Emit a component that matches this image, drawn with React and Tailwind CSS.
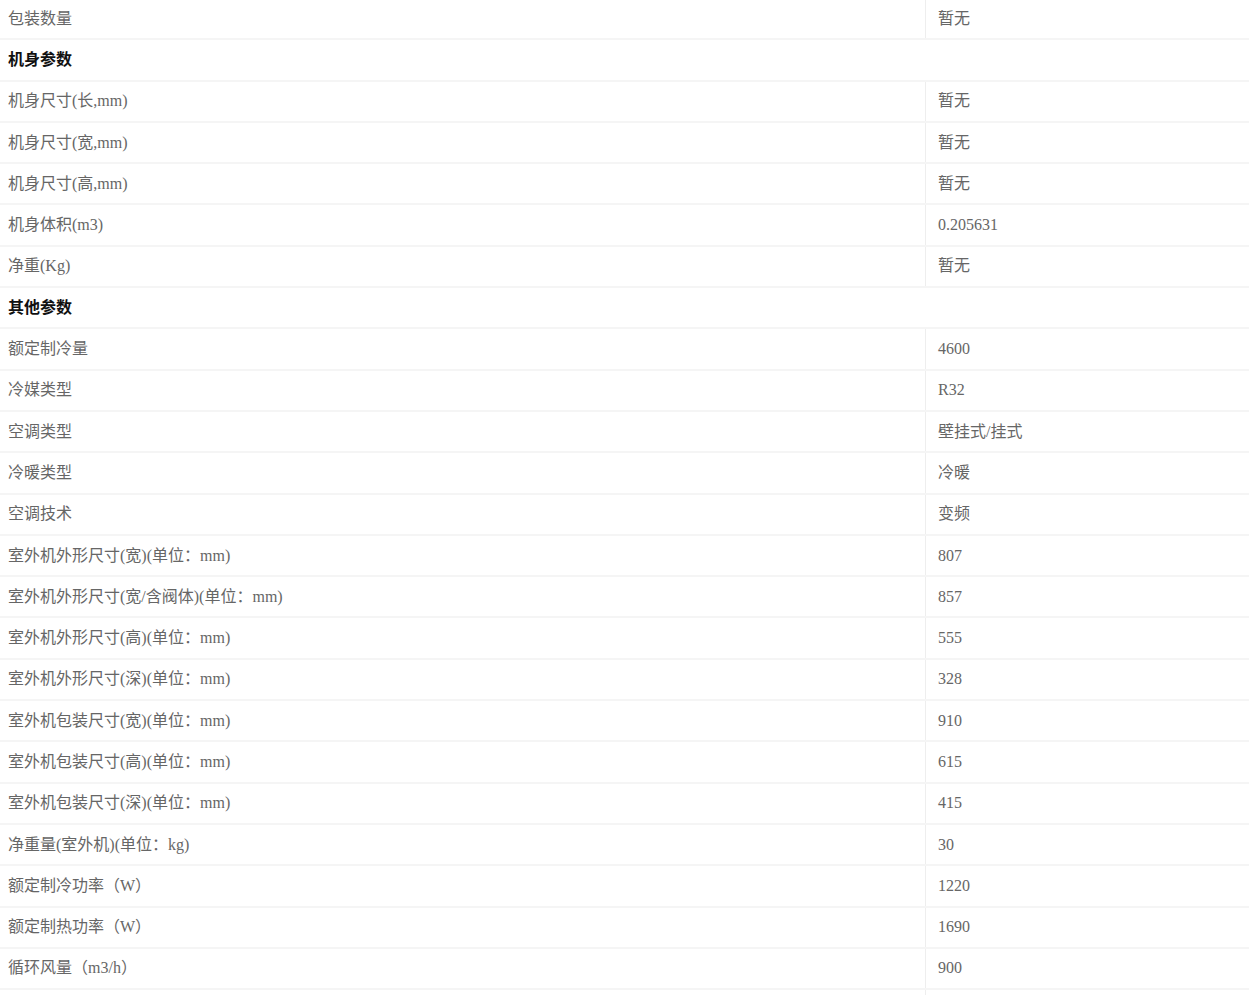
import React from "react";

const rows = [
  ["包装数量", "暂无"],
  ["机身参数"],
  ["机身尺寸(长,mm)", "暂无"],
  ["机身尺寸(宽,mm)", "暂无"],
  ["机身尺寸(高,mm)", "暂无"],
  ["机身体积(m3)", "0.205631"],
  ["净重(Kg)", "暂无"],
  ["其他参数"],
  ["额定制冷量", "4600"],
  ["冷媒类型", "R32"],
  ["空调类型", "壁挂式/挂式"],
  ["冷暖类型", "冷暖"],
  ["空调技术", "变频"],
  ["室外机外形尺寸(宽)(单位：mm)", "807"],
  ["室外机外形尺寸(宽/含阀体)(单位：mm)", "857"],
  ["室外机外形尺寸(高)(单位：mm)", "555"],
  ["室外机外形尺寸(深)(单位：mm)", "328"],
  ["室外机包装尺寸(宽)(单位：mm)", "910"],
  ["室外机包装尺寸(高)(单位：mm)", "615"],
  ["室外机包装尺寸(深)(单位：mm)", "415"],
  ["净重量(室外机)(单位：kg)", "30"],
  ["额定制冷功率（W）", "1220"],
  ["额定制热功率（W）", "1690"],
  ["循环风量（m3/h）", "900"],
  ["", ""],
];

export default function App() {
  return (
    <div
      className="w-[1249px] h-[995px] overflow-hidden bg-white"
      style={{ fontFamily: '"Liberation Serif", "Noto Sans CJK SC", serif' }}
    >
      <div className="-mt-[1px] flex flex-col">
        {rows.map((r, i) =>
          r.length === 1 ? (
            <div
              key={i}
              className="h-[41.3px] shrink-0 flex items-center border-b-2 border-[#f5f5f5] pl-[8px] text-[16px] font-bold text-[#111]"
            >
              {r[0]}
            </div>
          ) : (
            <div
              key={i}
              className="h-[41.3px] shrink-0 flex border-b-2 border-[#f5f5f5] text-[16px] text-[#666]"
            >
              <div className="w-[926px] shrink-0 flex items-center pl-[8px] border-r border-[#eeeeee]">
                {r[0]}
              </div>
              <div className="flex-1 flex items-center pl-[12px]">{r[1]}</div>
            </div>
          )
        )}
      </div>
    </div>
  );
}
